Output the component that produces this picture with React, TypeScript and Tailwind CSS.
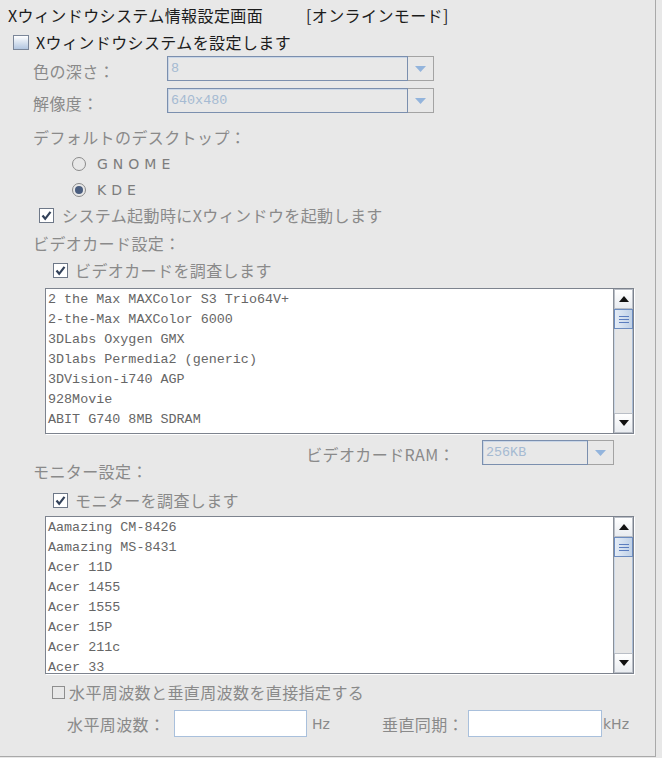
import React from 'react';

const videoCards = [
  '2 the Max MAXColor S3 Trio64V+',
  '2-the-Max MAXColor 6000',
  '3DLabs Oxygen GMX',
  '3Dlabs Permedia2 (generic)',
  '3DVision-i740 AGP',
  '928Movie',
  'ABIT G740 8MB SDRAM',
];

const monitors = [
  'Aamazing CM-8426',
  'Aamazing MS-8431',
  'Acer 11D',
  'Acer 1455',
  'Acer 1555',
  'Acer 15P',
  'Acer 211c',
  'Acer 33',
];

const Check = () => (
  <svg width="13" height="13" viewBox="0 0 13 13">
    <path d="M2.5 6.5 L5.2 9.8 L10.5 2.8" fill="none" stroke="#33425a" strokeWidth="2.2" />
  </svg>
);

const CheckBox = ({ kind }: { kind: 'blank' | 'checked' | 'off' }) => {
  if (kind === 'blank')
    return <div className="w-[16px] h-[15px] border border-[#7a8699] bg-gradient-to-b from-white to-[#b2c6e0]" />;
  if (kind === 'checked')
    return (
      <div className="w-[15px] h-[15px] border border-[#6e7888] bg-white flex items-center justify-center">
        <Check />
      </div>
    );
  return <div className="w-[13px] h-[13px] border border-[#8e8e8e]" />;
};

const Radio = ({ on }: { on?: boolean }) => (
  <div className="w-[14px] h-[14px] rounded-full border border-[#8a8a8a] flex items-center justify-center">
    {on && <div className="w-[8px] h-[8px] rounded-full bg-[#4a5d7e]" />}
  </div>
);

const Combo = ({ value, textW }: { value: string; textW: string }) => (
  <div className="flex h-[25px]">
    <div
      className={`${textW} h-full border border-[#7b8fae] shadow-[inset_1px_1px_0_#c9d6e7] flex items-center pl-[3px] text-[#a5bad2] font-['Liberation_Mono',monospace] text-[13.4px] tracking-normal`}
    >
      {value}
    </div>
    <div className="w-[26px] h-full border border-l-0 border-[#a3a3a3] flex items-center justify-center">
      <svg width="11" height="6" viewBox="0 0 11 6">
        <polygon points="0,0 11,0 5.5,6" fill="#93b4dc" />
      </svg>
    </div>
  </div>
);

const Arrow = ({ up }: { up?: boolean }) => (
  <div className="flex-none w-full h-[20px] border border-[#b9bec6] bg-gradient-to-b from-white to-[#e9ecf0] flex items-center justify-center">
    <svg width="10" height="6" viewBox="0 0 10 6">
      <polygon points={up ? '0,6 10,6 5,0' : '0,0 10,0 5,6'} fill="#111" />
    </svg>
  </div>
);

const ScrollBar = () => (
  <div className="w-[20px] h-full flex flex-col border-l border-[#8a9099] bg-[#e6e6e6]">
    <Arrow up />
    <div className="flex-none h-[20px] border border-[#6c8cc0] bg-gradient-to-r from-[#e4ecf6] to-[#c0d1e7] flex flex-col items-center justify-center gap-[2px]">
      <div className="w-[10px] h-px bg-[#5b7dbf]" />
      <div className="w-[10px] h-px bg-[#5b7dbf]" />
      <div className="w-[10px] h-px bg-[#5b7dbf]" />
    </div>
    <div className="flex-1 border-l border-r border-[#a9bcd6] border-l-[#cbd7e6]" />
    <Arrow />
  </div>
);

const ListBox = ({ items, h }: { items: string[]; h: string }) => (
  <div className={`ml-[45px] w-[589px] ${h} flex border border-[#7d838e] shadow-[1px_1px_0_#ffffff] bg-white`}>
    <div className="flex-1 overflow-hidden pl-[2px] pt-[1px] font-['Liberation_Mono',monospace] text-[13.4px] tracking-normal text-[#666]">
      {items.map((it) => (
        <div key={it} className="h-[20px] leading-[20px] whitespace-pre">
          {it}
        </div>
      ))}
    </div>
    <ScrollBar />
  </div>
);

export default function App() {
  return (
    <div className="w-[662px] h-[758px] bg-[#e8e8e8] font-['Noto_Sans_CJK_JP',sans-serif] text-[16px] tracking-[0.4px] leading-none">
      <div className="w-[656px] h-[757px] border-r border-b border-[#a9a9a9] flex flex-col">
        {/* title */}
        <div className="h-[30px] flex items-center pl-[8px] text-[#1c1c1c]">
          <span className="w-[298px]">Xウィンドウシステム情報設定画面</span>
          <span>[オンラインモード]</span>
        </div>

        <div className="h-[24px] flex items-center pl-[13px] text-[#1c1c1c]">
          <CheckBox kind="blank" />
          <span className="ml-[7px]">Xウィンドウシステムを設定します</span>
        </div>

        <div className="mt-[2px] h-[25px] flex items-center text-[#8a8a8a]">
          <span className="w-[167px] pl-[33px] pt-[4px]">色の深さ：</span>
          <Combo value="8" textW="w-[241px]" />
        </div>

        <div className="mt-[7px] h-[25px] flex items-center text-[#8a8a8a]">
          <span className="w-[167px] pl-[33px] pt-[4px]">解像度：</span>
          <Combo value="640x480" textW="w-[241px]" />
        </div>

        <div className="mt-[14px] h-[20px] flex items-center pl-[33px] text-[#8a8a8a]">デフォルトのデスクトップ：</div>

        <div className="mt-[7px] h-[20px] flex items-center pl-[72px]">
          <Radio />
          <span className="ml-[11px] font-['DejaVu_Sans',sans-serif] text-[14px] tracking-[5px] text-[#7d7d7d]">GNOME</span>
        </div>

        <div className="mt-[6px] h-[20px] flex items-center pl-[72px]">
          <Radio on />
          <span className="ml-[11px] font-['DejaVu_Sans',sans-serif] text-[14px] tracking-[5px] text-[#7d7d7d]">KDE</span>
        </div>

        <div className="mt-[4px] h-[22px] flex items-center pl-[39px] text-[#8a8a8a]">
          <CheckBox kind="checked" />
          <span className="ml-[8px]">システム起動時にXウィンドウを起動します</span>
        </div>

        <div className="mt-[7px] h-[20px] flex items-center pl-[33px] text-[#8a8a8a]">ビデオカード設定：</div>

        <div className="mt-[7px] h-[20px] flex items-center pl-[53px] text-[#8a8a8a]">
          <CheckBox kind="checked" />
          <span className="ml-[7px]">ビデオカードを調査します</span>
        </div>

        <div className="mt-[8px]">
          <ListBox items={videoCards} h="h-[146px]" />
        </div>

        {/* RAM + monitor header */}
        <div className="h-[82px] flex text-[#8a8a8a]">
          <div className="flex flex-col pt-[27px]">
            <div className="h-[20px] flex items-center pl-[33px]">モニター設定：</div>
            <div className="mt-[9px] h-[20px] flex items-center pl-[53px]">
              <CheckBox kind="checked" />
              <span className="ml-[7px]">モニターを調査します</span>
            </div>
          </div>
          <div className="ml-auto mr-[41px] mt-[6px] h-[25px] flex items-center">
            <span className="mr-[27px] pt-[3px]">ビデオカードRAM：</span>
            <Combo value="256KB" textW="w-[106px]" />
          </div>
        </div>

        <ListBox items={monitors} h="h-[158px]" />

        <div className="mt-[8px] h-[20px] flex items-center pl-[52px] text-[#8a8a8a]">
          <CheckBox kind="off" />
          <span className="ml-[4px]">水平周波数と垂直周波数を直接指定する</span>
        </div>

        <div className="mt-[8px] h-[27px] flex items-center pl-[67px] text-[#8a8a8a]">
          <span className="w-[107px]">水平周波数：</span>
          <div className="w-[133px] h-full bg-white border border-[#a9c0dc]" />
          <span className="ml-[5px] w-[70px] text-[14px] tracking-normal font-['DejaVu_Sans',sans-serif] text-[#8a8a8a]">Hz</span>
          <span className="w-[86px]">垂直同期：</span>
          <div className="w-[134px] h-full bg-white border border-[#a9c0dc]" />
          <span className="ml-[1px] text-[14px] tracking-normal font-['DejaVu_Sans',sans-serif] text-[#8a8a8a]">kHz</span>
        </div>
      </div>
    </div>
  );
}
